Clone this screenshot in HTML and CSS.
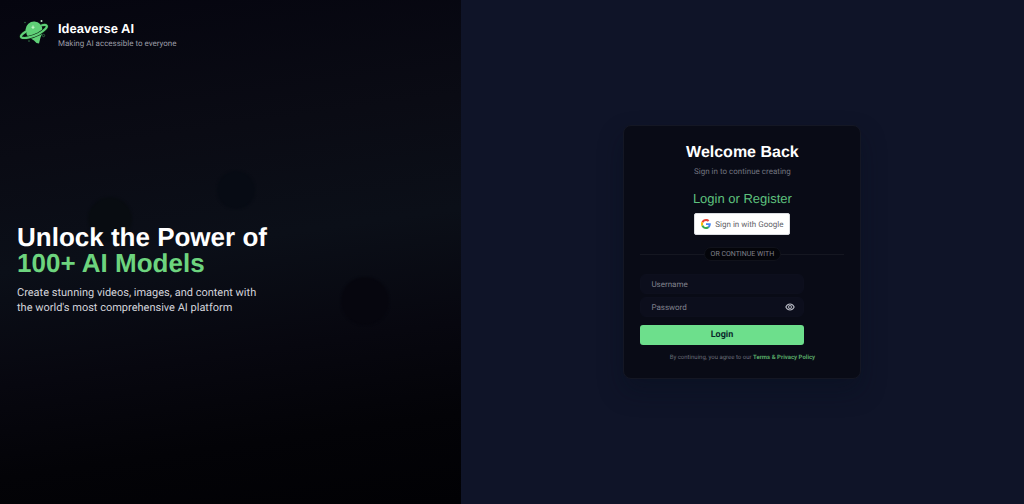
FILE: index.html
```
<!DOCTYPE html>
<html lang="en">
<head>
    <meta charset="UTF-8">
    <meta name="viewport" content="width=device-width, initial-scale=1.0">
    <title>Ideaverse AI - Login</title>
    <link rel="stylesheet" href="styles.css">
</head>
<body>
    <div class="page">
        <section class="showcase">
            <!-- Floating orbs behind the text -->
            <div class="orb orb-one"></div>
            <div class="orb orb-two"></div>
            <div class="orb orb-three"></div>

            <header class="brand">
                <svg class="brand-logo" viewBox="0 0 34 34" aria-hidden="true">
                    <path d="M8.500 13.500a8.500 8.500 0 1 1 17 1c0 3-1 4.500-2 7l-1.500 6-2.500-.5-2.500-2.500-4-2.500c-3-1.500-4.500-5-4.500-8.500z" fill="#5fd077"/>
                    <path d="M9 15.500C4.500 18 3 20.500 4.500 21.500c3 1.500 11-.5 17-3.500 6-3.200 9.500-7 8-8.500-.8-.9-2.500-.8-4.500-.2" fill="none" stroke="#0b2012" stroke-width="3.600"/>
                    <path d="M9 15.500C4.500 18 3 20.500 4.500 21.500c3 1.500 11-.5 17-3.500 6-3.200 9.500-7 8-8.500-.8-.9-2.500-.8-4.500-.2" fill="none" stroke="#5fd077" stroke-width="2.200" stroke-linecap="round"/>
                    <path d="M16 9.500v3.500M14.500 11.300h3" stroke="#c6f8cb" stroke-width="1"/>
                    <circle cx="24.500" cy="5" r="1" fill="#bfe9c8"/>
                    <circle cx="8" cy="6.500" r=".7" fill="#3c8550"/>
                    <circle cx="26.500" cy="19.500" r="1.200" fill="none" stroke="#3c8550" stroke-width=".7"/>
                    <circle cx="12" cy="25" r=".8" fill="#3c8550"/>
                </svg>
                <div>
                    <div class="brand-name">Ideaverse AI</div>
                    <div class="brand-tagline">Making AI accessible to everyone</div>
                </div>
            </header>

            <div class="hero">
                <h1>Unlock the Power of<br><span class="highlight">100+ AI Models</span></h1>
                <p>Create stunning videos, images, and content with<br>the world's most comprehensive AI platform</p>
            </div>
        </section>

        <main class="auth">
            <div class="card">
                <h2>Welcome Back</h2>
                <p class="subtitle">Sign in to continue creating</p>

                <h3>Login or Register</h3>
                <button type="button" class="google-button">
                    <svg viewBox="0 0 48 48" aria-hidden="true">
                        <path fill="#EA4335" d="M24 9.500c3.540 0 6.710 1.220 9.210 3.600l6.850-6.850C35.900 2.380 30.470 0 24 0 14.620 0 6.510 5.380 2.560 13.220l7.980 6.190C12.430 13.720 17.740 9.500 24 9.500z"/>
                        <path fill="#4285F4" d="M46.980 24.550c0-1.570-.15-3.090-.38-4.550H24v9.020h12.940c-.58 2.960-2.260 5.480-4.780 7.180l7.730 6c4.510-4.180 7.090-10.360 7.090-17.650z"/>
                        <path fill="#FBBC05" d="M10.530 28.590c-.48-1.450-.76-2.990-.76-4.590s.27-3.140.76-4.590l-7.980-6.190C.92 16.460 0 20.120 0 24s.92 7.540 2.560 10.780l7.970-6.190z"/>
                        <path fill="#34A853" d="M24 48c6.480 0 11.930-2.130 15.890-5.810l-7.730-6c-2.150 1.450-4.920 2.300-8.160 2.300-6.260 0-11.570-4.220-13.470-9.910l-7.980 6.190C6.510 42.620 14.620 48 24 48z"/>
                    </svg>
                    Sign in with Google
                </button>

                <div class="divider"><span>OR CONTINUE WITH</span></div>

                <form class="login-form">
                    <input type="text" placeholder="Username" aria-label="Username">
                    <div class="password-field">
                        <input type="password" placeholder="Password" aria-label="Password">
                        <button type="button" class="toggle-password" aria-label="Show password">
                            <svg viewBox="0 0 24 24" aria-hidden="true">
                                <path d="M2 12s3.500-7 10-7 10 7 10 7-3.500 7-10 7-10-7-10-7z"/>
                                <circle cx="12" cy="12" r="3.500"/>
                            </svg>
                        </button>
                    </div>
                    <button type="submit" class="login-button">Login</button>
                </form>

                <p class="terms">By continuing, you agree to our <a href="#">Terms &amp; Privacy Policy</a></p>
            </div>
        </main>
    </div>
</body>
</html>
```
FILE: styles.css
```
* {
    margin: 0;
    padding: 0;
    box-sizing: border-box;
}

body {
    font-family: "Liberation Sans", Arial, sans-serif;
    text-rendering: geometricPrecision;
    background: #0f1428;
    color: #fff;
}

button,
input {
    text-rendering: inherit;
}

.page {
    display: flex;
    min-height: 100vh;
}

/* Left side */
.showcase {
    position: relative;
    flex: 0 0 45%;
    display: flex;
    flex-direction: column;
    padding: 16px 17px;
    overflow: hidden;
    background: linear-gradient(172deg, #05050f 0%, #0a0b14 28%, #0b0f18 48%, #07070f 68%, #030307 84%, #010104 100%);
}

.orb {
    position: absolute;
    border-radius: 50%;
    filter: blur(1px);
}

.orb-one {
    top: 39%;
    left: 19%;
    width: 44px;
    height: 44px;
    background: #080c11;
}

.orb-two {
    top: 34%;
    left: 47%;
    width: 38px;
    height: 38px;
    background: #070b14;
}

.orb-three {
    top: 55%;
    left: 74%;
    width: 48px;
    height: 48px;
    background: #06060e;
}

.brand {
    position: relative;
    display: flex;
    align-items: flex-end;
    gap: 7px;
}

.brand-logo {
    width: 34px;
    height: 34px;
}

.brand-name {
    font-size: 13px;
    line-height: 16px;
    font-weight: 700;
}

.brand-tagline {
    font-family: Roboto, sans-serif;
    font-size: 8px;
    line-height: 13px;
    color: #9a9ba5;
}

.hero {
    position: relative;
    flex: 1;
    display: flex;
    flex-direction: column;
    justify-content: center;
}

.hero h1 {
    font-size: 26px;
    line-height: 26px;
    font-weight: 700;
    margin-bottom: 9px;
}

.highlight {
    color: #6dd47e;
}

.hero p {
    font-family: Roboto, sans-serif;
    font-size: 11px;
    line-height: 15px;
    color: #d2d3da;
}

/* Right side */
.auth {
    flex: 1;
    display: flex;
    align-items: center;
    justify-content: center;
    background: #0f1428;
}

.card {
    width: 238px;
    padding: 17px 16px 14px;
    text-align: center;
    background: #090b16;
    border: 1px solid #141724;
    border-radius: 8px;
    box-shadow: 0 12px 24px rgba(5, 14, 30, 0.35);
}

.card h2 {
    font-size: 16px;
    line-height: 19px;
    margin-bottom: 4px;
}

.subtitle {
    font-family: Roboto, sans-serif;
    font-size: 8px;
    line-height: 12px;
    margin-bottom: 12px;
    color: #71737f;
}

.card h3 {
    font-size: 13px;
    line-height: 18px;
    font-weight: 400;
    margin-bottom: 5px;
    color: #5fc27e;
}

.google-button {
    display: flex;
    align-items: center;
    gap: 4px;
    height: 22px;
    margin: 0 auto 12px;
    padding: 0 6px;
    font-family: Roboto, sans-serif;
    font-size: 8px;
    color: #5f6368;
    background: #fff;
    border: 1px solid #dadce0;
    border-radius: 2px;
}

.google-button svg {
    width: 10px;
    height: 10px;
}

.divider {
    display: flex;
    align-items: center;
    margin-bottom: 13px;
}

.divider::before,
.divider::after {
    content: "";
    flex: 1;
    height: 1px;
    background: #151721;
}

.divider span {
    padding: 0 6px;
    font-family: Roboto, sans-serif;
    font-size: 7px;
    line-height: 12px;
    color: #81828b;
    background: #04050a;
    border: 1px solid #10121b;
    border-radius: 7px;
}

.login-form {
    display: flex;
    flex-direction: column;
    gap: 3px;
    width: 80%;
}

.login-form input {
    width: 100%;
    height: 20px;
    padding: 0 10px;
    font-family: Roboto, sans-serif;
    font-size: 8px;
    color: #fff;
    background: #0c0e1c;
    border: 1px solid #0d0f1d;
    border-radius: 6px;
    outline: none;
}

.login-form input::placeholder {
    color: #81828e;
}

.password-field {
    position: relative;
    display: flex;
}

.toggle-password {
    position: absolute;
    top: 0;
    right: 9px;
    height: 100%;
    display: flex;
    align-items: center;
    background: none;
    border: none;
}

.toggle-password svg {
    width: 10px;
    height: 10px;
    fill: none;
    stroke: #b4b6c0;
    stroke-width: 2.5;
}

.login-button {
    height: 20px;
    margin-top: 5px;
    font-family: Roboto, sans-serif;
    font-size: 9px;
    font-weight: 700;
    color: #0b2a2b;
    background: #6ddf8c;
    border: none;
    border-radius: 3px;
}

.terms {
    margin-top: 7px;
    font-family: Roboto, sans-serif;
    font-size: 6px;
    line-height: 12px;
    color: #6b6d78;
}

.terms a {
    color: #57a866;
    font-weight: 700;
    text-decoration: none;
}
```
